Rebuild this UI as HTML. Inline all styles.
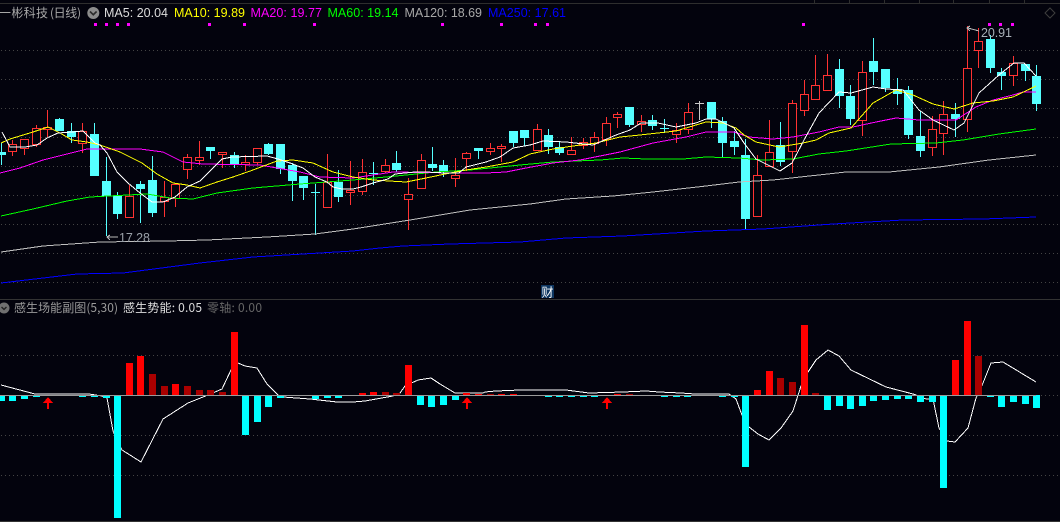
<!DOCTYPE html>
<html><head><meta charset="utf-8"><title>一彬科技</title>
<style>html,body{margin:0;padding:0;background:#03030d;width:1060px;height:522px;overflow:hidden}
svg{display:block}
text{font-family:"Liberation Sans","Noto Sans CJK SC",sans-serif;font-size:12.5px}
.c{font-family:"Noto Sans CJK SC","Liberation Sans",sans-serif;font-size:12px}
</style></head><body>
<svg xmlns="http://www.w3.org/2000/svg" width="1060" height="522" viewBox="0 0 1060 522">
<rect width="1060" height="522" fill="#03030d"/>
<g shape-rendering="crispEdges">
<path d="M0 3.5H1060M814.5 0V3M849.5 0V3M884.5 0V3M919.5 0V3M953.5 0V3M989.5 0V3M1024.5 0V3" stroke="#2e2e2e" fill="none"/>
<path d="M0 299.5H1060M0 521.5H1060" stroke="#333" fill="none"/>
<path d="M1 50.5H1060M1 79.5H1060M1 108.5H1060M1 137.5H1060M1 166.5H1060M1 195.5H1060M1 224.5H1060M1 253.5H1060M1 282.5H1060M1 355.5H1060M1 435.5H1060M1 475.5H1060M1037 395.5H1060" stroke="#444444" stroke-dasharray="1 3" fill="none"/>
<path d="M94 23h3v3h-3zM105 23h3v3h-3zM116 23h3v3h-3zM127 23h3v3h-3zM208 23h3v3h-3zM243 23h3v3h-3zM313 23h3v3h-3zM441 23h3v3h-3zM500 23h3v3h-3zM534 23h3v3h-3zM546 23h3v3h-3zM802 23h3v3h-3zM988 23h3v3h-3zM999 23h3v3h-3zM1011 23h3v3h-3z" fill="#ff00ff"/>

<!-- cyan candles -->
<path stroke="#55ffff" fill="none" d="M1.5 143V165M59.5 118V131M71.5 123V143M94.5 123V176M106.5 157V236M117.5 192V219M140.5 181V223M152.5 156V217M210.5 147V159M234.5 152V168M268.5 143V155M280.5 144V174M292.5 163V201M303.5 176V200M315.5 184V235M338.5 170V202M373.5 162V185M396.5 151V172M432.5 147V171M443.5 160V177M478.5 148V159M513.5 131V147M524.5 130V146M548.5 129V154M559.5 141V155M629.5 107V127M652.5 115V130M664.5 119V133M711.5 102V128M722.5 117V157M734.5 131V155M745.5 139V230M780.5 122V166M839.5 59V108M850.5 85V125M873.5 38V85M885.5 69V92M897.5 78V105M908.5 86V139M920.5 111V157M955.5 103V137M990.5 35V73M1001.5 68V90M1025.5 64V81M1036.5 65V111"/>
<path fill="#55ffff" d="M-3 152h9v3h-9zM55 119h9v12h-9zM67 131h9v6h-9zM90 134h9v42h-9zM102 181h9v15h-9zM113 196h9v18h-9zM136 184h9v5h-9zM148 180h9v33h-9zM206 147h9v4h-9zM230 155h9v10h-9zM264 144h9v10h-9zM276 144h9v25h-9zM288 165h9v16h-9zM299 176h9v12h-9zM311 192h9v1h-9zM334 182h9v15h-9zM369 173h9v1h-9zM392 163h9v7h-9zM428 164h9v4h-9zM439 165h9v7h-9zM474 148h9v3h-9zM509 131h9v12h-9zM520 130h9v8h-9zM544 135h9v12h-9zM555 147h9v6h-9zM625 107h9v18h-9zM648 120h9v6h-9zM660 128h9v1h-9zM707 102h9v17h-9zM718 121h9v22h-9zM730 141h9v6h-9zM741 155h9v64h-9zM776 145h9v17h-9zM835 69h9v27h-9zM846 96h9v23h-9zM869 61h9v11h-9zM881 69h9v19h-9zM893 89h9v5h-9zM904 90h9v45h-9zM916 136h9v15h-9zM951 114h9v5h-9zM986 39h9v29h-9zM997 72h9v4h-9zM1021 64h9v7h-9zM1032 76h9v28h-9z"/>

<!-- red candles -->
<path stroke="#ff3232" fill="none" d="M12.5 140V156M24.5 139V155M36.5 125V147M47.5 110V137M82.5 123V153M129.5 185V218M164.5 181V217M175.5 184V207M187.5 154V179M199.5 141V165M222.5 153V168M245.5 155V171M257.5 148V165M327.5 154V207M350.5 161V205M362.5 159V195M385.5 159V173M408.5 178V230M421.5 154V189M455.5 158V187M466.5 152V171M490.5 143V155M501.5 144V162M537.5 124V150M571.5 137V154M583.5 138V149M594.5 132V152M606.5 117V146M617.5 112V128M641.5 115V132M676.5 123V143M688.5 103V134M757.5 155V216M769.5 120V167M792.5 100V173M804.5 80V116M815.5 55V100M827.5 54V90M862.5 61V136M932.5 116V156M943.5 101V155M967.5 26V132M978.5 28V68M1013.5 56V86"/>
<path stroke="#ff3232" fill="#03030d" d="M8.5 144.5h8v7h-8zM20.5 139.5h8v9h-8zM32.5 128.5h8v16h-8zM43.5 127.5h8v2h-8zM78.5 131.5h8v12h-8zM125.5 196.5h8v21h-8zM160.5 197.5h8v4h-8zM171.5 184.5h8v14h-8zM183.5 157.5h8v12h-8zM195.5 157.5h8v3h-8zM218.5 152.5h8v2h-8zM241.5 162.5h8v2h-8zM253.5 148.5h8v14h-8zM323.5 182.5h8v25h-8zM346.5 190.5h8v2h-8zM358.5 172.5h8v19h-8zM381.5 165.5h8v6h-8zM404.5 194.5h8v5h-8zM417.5 160.5h8v28h-8zM451.5 175.5h8v3h-8zM462.5 153.5h8v5h-8zM486.5 148.5h8v3h-8zM497.5 146.5h8v2h-8zM533.5 129.5h8v21h-8zM567.5 150.5h8v4h-8zM579.5 142.5h8v3h-8zM590.5 137.5h8v6h-8zM602.5 123.5h8v16h-8zM613.5 114.5h8v3h-8zM637.5 121.5h8v3h-8zM672.5 130.5h8v4h-8zM684.5 112.5h8v17h-8zM753.5 175.5h8v41h-8zM765.5 152.5h8v14h-8zM788.5 103.5h8v48h-8zM800.5 94.5h8v16h-8zM811.5 85.5h8v14h-8zM823.5 75.5h8v15h-8zM858.5 72.5h8v48h-8zM928.5 129.5h8v18h-8zM939.5 114.5h8v19h-8zM963.5 68.5h8v51h-8zM974.5 41.5h8v9h-8zM1009.5 63.5h8v12h-8z"/>
<path stroke="#c8c8c8" fill="none" d="M699.5 101V120M695 103.5h9"/>

<!-- moving averages -->
<g fill="none" stroke-width="1">
<polyline stroke="#0000ff" points="1,283 77,274 123,273 200,263 253,257 353,251 380,248 403,246 450,244 520,242 566,238 623,236 706,231 763,229 833,224 903,220 983,219 1036,217"/>
<polyline stroke="#c0c0c0" points="1,252 43,246 100,242 167,241 207,240 267,237 315,234 353,229 410,220 470,210 530,204 566,199 613,196 653,192 706,186 739,182 773,180 846,172 889,172 939,167 989,160 1036,155"/>
<polyline stroke="#00ff00" points="1,216 33,209 67,201 90,197 147,194 170,198 193,199 217,193 253,188 300,184 353,180 386,177 436,172 470,170 520,165 553,162 600,160 623,158 646,159 683,159 706,157 739,158 763,160 793,159 819,154 846,151 891,144 936,143 963,140 999,134 1036,129"/>
<polyline stroke="#ff00ff" points="0,173 20,168 43,160 67,154 87,149 140,149 163,152 183,162 203,164 260,165 277,168 300,172 320,177 353,178 393,172 453,173 486,173 506,172 526,168 553,163 580,160 620,152 653,143 686,137 706,132 734,132 749,137 773,139 793,137 819,132 839,127 853,127 876,122 896,118 919,120 956,120 976,107 993,100 1013,95 1023,92 1036,92"/>
<polyline stroke="#ffff00" points="1,143 10,139 33,132 48,127 60,133 72,140 87,142 100,145 120,152 142,163 157,174 173,183 187,185 200,188 217,182 233,177 253,170 277,161 293,160 313,163 333,172 353,177 373,180 406,182 426,178 450,173 466,170 486,167 513,162 530,154 553,149 580,145 596,143 620,137 640,135 676,131 706,122 723,123 736,128 744,135 756,142 779,147 803,143 816,140 829,133 851,128 873,103 896,90 913,95 933,104 954,109 973,103 993,101 1013,97 1036,86"/>
<polyline stroke="#ffffff" points="2,132 10,147 25,147 37,145 47,138 58,133 72,132 83,131 95,143 100,145 107,153 117,172 128,183 140,193 152,202 163,202 175,197 187,187 200,181 213,168 222,159 232,157 267,156 278,159 290,163 303,168 315,177 327,182 333,187 342,189 353,189 361,187 373,183 388,179 395,174 415,172 425,172 446,173 459,173 466,167 486,162 500,157 513,148 530,145 543,141 566,142 593,145 616,135 630,130 641,123 658,123 676,127 696,123 706,119 716,119 734,128 744,143 756,159 780,171 792,163 804,140 819,113 839,92 851,93 873,87 886,89 903,90 919,110 933,120 954,130 964,123 979,93 999,75 1014,63 1024,63 1036,76"/>
</g>

<!-- extreme labels -->
<path fill="none" stroke="#b8b8b8" d="M118 237H107M110 235L107 237L110 240M979 31L968 28M970 26L967 28L970 31"/>

<!-- sub chart line -->
<polyline fill="none" stroke="#ffffff" points="1,385 35,394 89,394 102,396 107,398 113,431 122,450 141,462 163,419 188,403 208,395 222,389 231,370 238,363 245,366 257,368 267,384 278,395 283,397 310,399 337,402 353,402 365,401 393,396 400,393 405,386 418,380 431,378 440,384 455,393 483,393 485,392 496,391 520,390 566,390 589,393 623,392 646,391 659,392 681,393 695,394 729,394 736,399 742,415 749,427 758,434 769,440 781,428 793,411 801,386 808,372 816,360 828,350 839,356 851,370 886,387 913,394 916,395 926,399 933,399 939,428 947,441 955,442 968,428 976,398 983,383 991,363 1003,362 1036,382"/>

<!-- sub bars -->
<path fill="#00ffff" d="M0 395h5v6h-5zM9 395h7v6h-7zM21 395h7v4h-7zM33 395h7v2h-7zM79 395h7v2h-7zM91 395h7v2h-7zM103 395h7v3h-7zM114 395h7v123h-7zM242 395h7v40h-7zM254 395h7v27h-7zM265 395h7v12h-7zM277 395h7v3h-7zM312 395h7v4h-7zM324 395h7v3h-7zM335 395h7v3h-7zM417 395h7v10h-7zM428 395h7v12h-7zM440 395h7v10h-7zM452 395h7v5h-7zM545 395h7v2h-7zM556 395h7v2h-7zM568 395h7v2h-7zM580 395h7v2h-7zM591 395h7v2h-7zM661 395h7v2h-7zM673 395h7v2h-7zM684 395h7v2h-7zM719 395h7v2h-7zM731 395h7v2h-7zM742 395h7v72h-7zM824 395h7v15h-7zM836 395h7v11h-7zM847 395h7v14h-7zM859 395h7v11h-7zM870 395h7v6h-7zM882 395h7v5h-7zM894 395h7v4h-7zM905 395h7v4h-7zM917 395h7v7h-7zM929 395h7v7h-7zM940 395h7v93h-7zM987 395h7v2h-7zM998 395h7v12h-7zM1010 395h7v7h-7zM1022 395h7v9h-7zM1033 395h7v13h-7z"/>
<path fill="#ff0000" d="M126 363h7v32h-7zM137 356h7v39h-7zM172 384h7v11h-7zM231 332h7v63h-7zM359 393h7v2h-7zM370 392h7v3h-7zM405 365h7v30h-7zM463 393h7v2h-7zM475 394h7v1h-7zM498 394h7v1h-7zM510 394h7v1h-7zM614 394h7v1h-7zM754 390h7v5h-7zM766 371h7v24h-7zM801 325h7v70h-7zM952 360h7v35h-7zM964 321h7v74h-7z"/>
<path fill="#aa0000" d="M149 374h7v21h-7zM161 386h7v9h-7zM184 386h7v9h-7zM196 390h7v5h-7zM207 390h7v5h-7zM219 392h7v3h-7zM382 392h7v3h-7zM393 393h7v2h-7zM487 394h7v1h-7zM626 394h7v1h-7zM777 378h7v17h-7zM789 382h7v13h-7zM812 393h7v2h-7zM975 356h7v39h-7z"/>
<path stroke="#9a9a9a" fill="none" d="M0 395.5H1036"/>
<path fill="#ff0000" d="M48 397l5 6h-4v6h-2v-6h-4zM467 397l5 6h-4v6h-2v-6h-4zM607 397l5 6h-4v6h-2v-6h-4z"/>
</g>

<!-- headers -->
<text class="c" x="-1" y="17" fill="#a8a8a8" textLength="49" lengthAdjust="spacing">一彬科技</text>
<text class="c" x="50" y="17" fill="#a8a8a8" textLength="31" lengthAdjust="spacing">(日线)</text>
<circle cx="93.3" cy="13" r="6" fill="#8c8c8c"/>
<path d="M90 11.5l3.3 3.2 3.3-3.2" fill="none" stroke="#2a2a2a" stroke-width="1.6"/>
<text x="104" y="17" fill="#dcdcdc" textLength="64" lengthAdjust="spacing">MA5: 20.04</text>
<text x="174" y="17" fill="#ffff00" textLength="71" lengthAdjust="spacing">MA10: 19.89</text>
<text x="250.5" y="17" fill="#ff00ff" textLength="71.5" lengthAdjust="spacing">MA20: 19.77</text>
<text x="327.5" y="17" fill="#00ff00" textLength="71" lengthAdjust="spacing">MA60: 19.14</text>
<text x="404.5" y="17" fill="#a8a8a8" textLength="77.5" lengthAdjust="spacing">MA120: 18.69</text>
<text x="488" y="17" fill="#0000ff" textLength="78" lengthAdjust="spacing">MA250: 17.61</text>
<path d="M1050 8l5 5-5 5-5-5z" fill="none" stroke="#3e3e3e"/>
<text x="119" y="242" fill="#9aa0a8" textLength="31" lengthAdjust="spacing">17.28</text>
<text x="981" y="37" fill="#a8b0b8" textLength="31" lengthAdjust="spacing">20.91</text>
<rect x="541" y="285" width="13" height="13" fill="#0d3560"/>
<text class="c" x="541.5" y="296.5" fill="#ffffff">财</text>
<circle cx="4" cy="308" r="5.5" fill="#707070"/>
<path d="M1.5 307l2.5 2.4 2.5-2.4" fill="none" stroke="#222" stroke-width="1.4"/>
<text class="c" x="14" y="312" fill="#9a9a9a" textLength="104" lengthAdjust="spacing">感生场能副图(5,30)</text>
<text class="c" x="123" y="312" fill="#dddddd" textLength="79" lengthAdjust="spacing">感生势能: 0.05</text>
<text class="c" x="207" y="312" fill="#666666" textLength="55" lengthAdjust="spacing">零轴: 0.00</text>
</svg>
</body></html>
